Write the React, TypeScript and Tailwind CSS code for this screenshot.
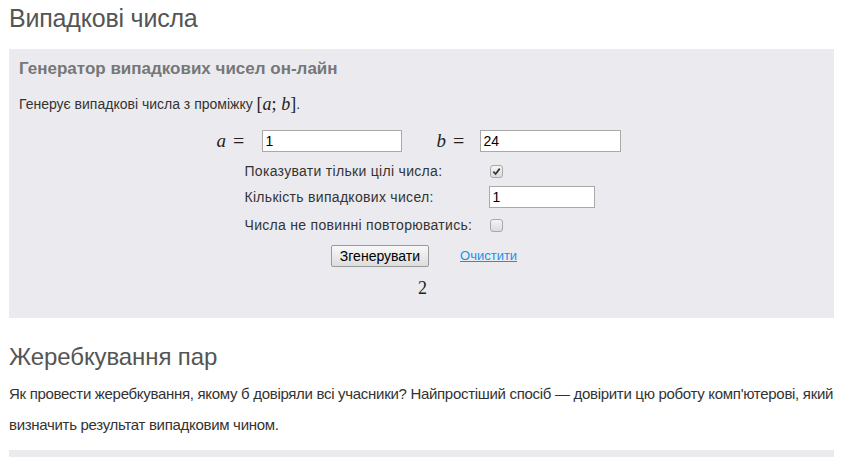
import React from 'react';

const SANS = { fontFamily: '"Liberation Sans", Arial, sans-serif' };
const SERIF = { fontFamily: '"Liberation Serif", "DejaVu Serif", serif' };

function Box({ checked }: { checked?: boolean }) {
  return (
    <span className="inline-flex items-center justify-center w-[13px] h-[13px] rounded-[3px] border border-[#a9a9a9] bg-gradient-to-b from-[#f4f4f4] to-[#dcdcdc]">
      {checked && (
        <svg viewBox="0 0 10 10" className="w-[9px] h-[9px]">
          <path d="M1.5 5.2 L4 7.8 L8.6 1.8" fill="none" stroke="#333" strokeWidth="1.9" />
        </svg>
      )}
    </span>
  );
}

function Field({ value, w }: { value: string; w: string }) {
  return (
    <div className={`${w} h-[22px] bg-white border border-[#a9a9a9] px-[3px] flex items-center text-[14px] text-black`}>
      {value}
    </div>
  );
}

function MathVar({ v, w }: { v: string; w: string }) {
  return (
    <span className={`${w} flex items-center text-[19px] text-[#222]`} style={SERIF}>
      <i>{v}</i>
      <span className="ml-[7px] text-[20px]">=</span>
    </span>
  );
}

export default function App() {
  return (
    <div className="w-[846px] h-[457px] overflow-hidden bg-white text-[#333]" style={SANS}>
      <div className="px-[9px] pt-[3px]">
        <h1 className="text-[25px] leading-[30px] text-[#555] tracking-[-0.2px]">Випадкові числа</h1>

        <div className="mt-[16px] w-[825px] h-[269px] bg-[#ebebef] px-[10px] pt-[9px]">
          <h2 className="text-[17px] leading-[22px] font-bold text-[#777]">Генератор випадкових чисел он-лайн</h2>
          <p className="mt-[13px] text-[14px] leading-[22px] text-[#333] flex items-center">
            Генерує випадкові числа з проміжку&nbsp;
            <span className="text-[18px] text-[#222]" style={SERIF}>
              [<i>a</i>;&nbsp;<i>b</i>]
            </span>
            .
          </p>

          <div className="mt-[15px] flex flex-col items-center">
            <div className="flex items-center h-[22px] ml-[-6px]">
              <MathVar v="a" w="w-[45px]" />
              <Field value="1" w="w-[140px]" />
              <span className="w-[35px]" />
              <MathVar v="b" w="w-[43px]" />
              <Field value="24" w="w-[141px]" />
            </div>

            <div className="mt-[7px] grid grid-cols-[244px_106px] text-[14px] tracking-[0.3px] text-[#333] ml-[-4px]">
              <div className="h-[25px] flex items-center">Показувати тільки цілі числа:</div>
              <div className="h-[25px] flex items-center pl-[1px]"><Box checked /></div>
              <div className="h-[26px] flex items-center">Кількість випадкових чисел:</div>
              <div className="h-[26px] flex items-center"><Field value="1" w="w-[106px]" /></div>
              <div className="h-[30px] flex items-center">Числа не повинні повторюватись:</div>
              <div className="h-[30px] flex items-center pl-[1px]"><Box /></div>
            </div>

            <div className="mt-[5px] flex items-center gap-[31px] ml-[5px]">
              <button className="h-[22px] px-[8px] text-[14px] text-black border border-[#9a9a9a] rounded-[2px] bg-gradient-to-b from-[#f8f8f8] to-[#dddddd]">
                Згенерувати
              </button>
              <a className="text-[13px] text-[#1e8fe8] underline">Очистити</a>
            </div>

            <div className="mt-[8px] ml-[2px] text-[18px] text-[#222]" style={SERIF}>2</div>
          </div>
        </div>

        <h1 className="mt-[24px] text-[24px] leading-[30px] text-[#555] tracking-[-0.1px]">Жеребкування пар</h1>
        <p className="mt-[6px] text-[15px] leading-[31px] text-[#333] tracking-[-0.3px]">
          Як провести жеребкування, якому б довіряли всі учасники? Найпростіший спосіб — довірити цю роботу комп'ютерові, який визначить результат випадковим чином.
        </p>
        <div className="mt-[10px] w-[825px] h-[20px] bg-[#ebebef]" />
      </div>
    </div>
  );
}
